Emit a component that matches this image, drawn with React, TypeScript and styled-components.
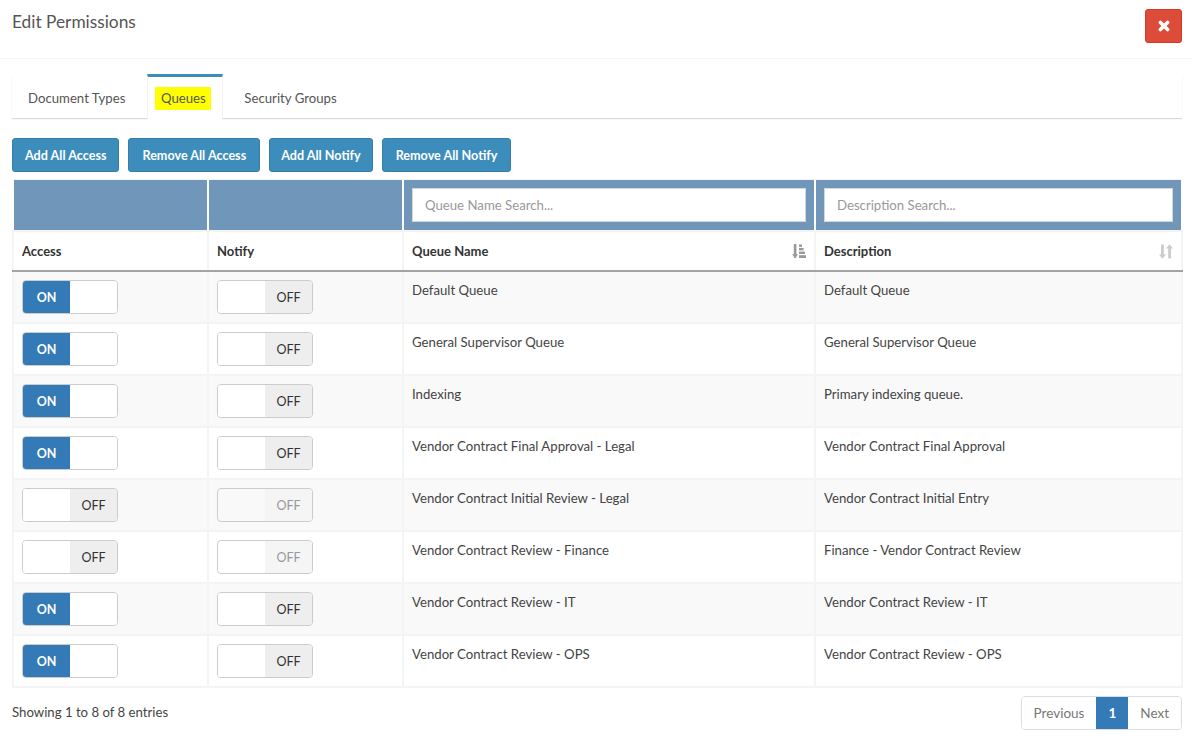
import React from "react";
import styled, { createGlobalStyle } from "styled-components";

const GlobalStyle = createGlobalStyle`
  html, body { margin: 0; padding: 0; background: #fff; }
  body {
    font-family: "Lato", "Noto Sans", sans-serif;
    font-size: 13.2px;
    color: #333;
    width: 1192px;
    height: 748px;
    overflow: hidden;
  }
  * { box-sizing: border-box; }
`;

const Header = styled.div`
  height: 59px;
  border-bottom: 1px solid #f4f4f4;
  padding: 9px 10px 0 12px;
  display: flex;
  justify-content: space-between;
  align-items: flex-start;
`;

const Title = styled.h4`
  margin: 2px 0 0;
  font-size: 17.3px;
  font-weight: 400;
  line-height: 22px;
  color: #555;
`;

const CloseButton = styled.button`
  width: 37px;
  height: 34px;
  border: 1px solid #d73925;
  border-radius: 3px;
  background: #dd4b39;
  color: #fff;
  padding: 0;
  display: flex;
  align-items: center;
  justify-content: center;
`;

const Body = styled.div`
  padding: 15px 10px 0 12px;
`;

const Tabs = styled.div`
  display: flex;
  height: 44px;
  box-shadow: 0 1px 1px rgba(0, 0, 0, 0.15);
`;

const Tab = styled.div<{ $active?: boolean }>`
  height: ${(p) => (p.$active ? "46px" : "44px")};
  padding: ${(p) => (p.$active ? "10px 11px 0 7px" : "12px 16px 0 15px")};
  border-top: 3px solid ${(p) => (p.$active ? "#3c8dbc" : "transparent")};
  background: #fff;
  color: #555;
  line-height: 18px;
  margin: ${(p) => (p.$active ? "0 5px" : "0")};
  border-left: 1px solid ${(p) => (p.$active ? "#f4f4f4" : "transparent")};
  border-right: 1px solid ${(p) => (p.$active ? "#f4f4f4" : "transparent")};
`;

const Mark = styled.span`
  display: block;
  background: #ffff00;
  height: 23px;
  width: 56px;
  text-align: center;
  line-height: 23px;
`;

const Actions = styled.div`
  display: flex;
  gap: 9px;
  margin-top: 20px;
  padding-bottom: 7px;
  border-bottom: 1px solid #f4f4f4;
`;

const ActionButton = styled.button<{ $pad: number }>`
  height: 34px;
  padding: 0 ${(p) => p.$pad}px;
  background: #3c8dbc;
  border: 1px solid #367fa9;
  border-radius: 3px;
  color: #fff;
  font-family: inherit;
  font-size: 12.6px;
  font-weight: 700;
  white-space: nowrap;
`;

const Table = styled.table`
  border-collapse: collapse;
  table-layout: fixed;
  width: 1169px;
`;

const FilterCell = styled.th`
  height: 50px;
  padding: 8px;
  background: #7096b9;
  border: 2px solid #f4f4f4;
  border-top: 0;
  border-left-color: #fff;
  border-right-color: #fff;
`;

const SearchInput = styled.input`
  display: block;
  width: 100%;
  height: 34px;
  padding: 0 12px;
  border: 1px solid #d2d6de;
  background: #fff;
  font-family: inherit;
  font-size: 13.2px;
  outline: none;
  &::placeholder { color: #999; opacity: 1; }
`;

const HeadCell = styled.th`
  height: 40px;
  padding: 0 8px;
  text-align: left;
  font-size: 13px;
  font-weight: 700;
  color: #333;
  background: #fff;
  border: 2px solid #f4f4f4;
  border-bottom: 2px solid #a3a3a3;
`;

const HeadInner = styled.div`
  display: flex;
  align-items: center;
  justify-content: space-between;
`;

const SortIcon = styled.span<{ $faded?: boolean }>`
  display: flex;
  color: ${(p) => (p.$faded ? "#ccc" : "#999")};
`;

const Row = styled.tr<{ $odd: boolean }>`
  background: ${(p) => (p.$odd ? "#f9f9f9" : "#fff")};
`;

const Cell = styled.td`
  height: 52px;
  padding: 8px;
  vertical-align: top;
  line-height: 20px;
  color: #444;
  border: 2px solid #f4f4f4;
`;

const Toggle = styled.div`
  width: 96px;
  height: 34px;
  display: flex;
  border: 1px solid #ccc;
  border-radius: 4px;
  overflow: hidden;
`;

const ToggleHalf = styled.span<{ $kind: "on" | "off" | "blank" | "offDisabled" | "blankDisabled" }>`
  flex: 1;
  display: flex;
  align-items: center;
  justify-content: center;
  padding-top: 2px;
  font-size: 12.5px;
  font-weight: ${(p) => (p.$kind === "on" ? 700 : 400)};
  color: ${(p) => (p.$kind === "on" ? "#fff" : p.$kind === "offDisabled" ? "#999" : "#333")};
  background: ${(p) =>
    p.$kind === "on"
      ? "#337ab7"
      : p.$kind === "off"
        ? "#eee"
        : p.$kind === "offDisabled"
          ? "#f5f5f5"
          : p.$kind === "blankDisabled"
            ? "transparent"
            : "#fff"};
`;

const Footer = styled.div`
  display: flex;
  justify-content: space-between;
  align-items: center;
  margin-top: 8px;
`;

const Info = styled.div`
  color: #444;
  padding-bottom: 2px;
`;

const Pager = styled.div`
  display: flex;
  height: 34px;
  border: 1px solid #ddd;
  border-radius: 4px;
  overflow: hidden;
  font-size: 13.5px;
`;

const PageItem = styled.span<{ $active?: boolean }>`
  padding: 0 12px;
  display: flex;
  align-items: center;
  font-weight: ${(p) => (p.$active ? 700 : 400)};
  color: ${(p) => (p.$active ? "#fff" : "#777")};
  background: ${(p) => (p.$active ? "#337ab7" : "#fff")};
`;

function SwitchControl({ on, disabled }: { on: boolean; disabled?: boolean }) {
  if (on) {
    return (
      <Toggle>
        <ToggleHalf $kind="on">ON</ToggleHalf>
        <ToggleHalf $kind="blank" />
      </Toggle>
    );
  }
  return (
    <Toggle>
      <ToggleHalf $kind={disabled ? "blankDisabled" : "blank"} />
      <ToggleHalf $kind={disabled ? "offDisabled" : "off"}>OFF</ToggleHalf>
    </Toggle>
  );
}

function CloseIcon() {
  return (
    <svg width="12" height="12" viewBox="0 0 12 12" fill="none" stroke="currentColor" strokeWidth="3.6" strokeLinecap="round">
      <path d="M2.4 2.4l7.2 7.2M9.6 2.4l-7.2 7.2" />
    </svg>
  );
}

function AmountIcon() {
  return (
    <svg width="14" height="15" viewBox="0 0 14 15" fill="currentColor">
      <path d="M1.8 0h2.6v10.2H6L3.1 14.8.2 10.2h1.6z" />
      <rect x="7" y="0.5" width="3" height="2.4" />
      <rect x="7" y="4" width="4.6" height="2.4" />
      <rect x="7" y="7.6" width="6" height="2.4" />
      <rect x="7" y="11.2" width="7" height="2.8" />
    </svg>
  );
}

function UpDownIcon() {
  return (
    <svg width="14" height="15" viewBox="0 0 14 15" fill="currentColor">
      <path d="M2 .5h2.8v10H7L3.4 14.8 0 10.5h2z" />
      <path d="M9.2 14.5H12v-10h2L10.6.2 7 4.5h2.2z" />
    </svg>
  );
}

const rows = [
  { access: true, notify: false, name: "Default Queue", description: "Default Queue" },
  { access: true, notify: false, name: "General Supervisor Queue", description: "General Supervisor Queue" },
  { access: true, notify: false, name: "Indexing", description: "Primary indexing queue." },
  { access: true, notify: false, name: "Vendor Contract Final Approval - Legal", description: "Vendor Contract Final Approval" },
  { access: false, notify: false, disabled: true, name: "Vendor Contract Initial Review - Legal", description: "Vendor Contract Initial Entry" },
  { access: false, notify: false, disabled: true, name: "Vendor Contract Review - Finance", description: "Finance - Vendor Contract Review" },
  { access: true, notify: false, name: "Vendor Contract Review - IT", description: "Vendor Contract Review - IT" },
  { access: true, notify: false, name: "Vendor Contract Review - OPS", description: "Vendor Contract Review - OPS" },
];

export default function App() {
  return (
    <>
      <GlobalStyle />
      <Header>
        <Title>Edit Permissions</Title>
        <CloseButton aria-label="Close">
          <CloseIcon />
        </CloseButton>
      </Header>
      <Body>
        <Tabs>
          <Tab>Document Types</Tab>
          <Tab $active>
            <Mark>Queues</Mark>
          </Tab>
          <Tab>Security Groups</Tab>
        </Tabs>
        <Actions>
          <ActionButton $pad={12}>Add All Access</ActionButton>
          <ActionButton $pad={13}>Remove All Access</ActionButton>
          <ActionButton $pad={11}>Add All Notify</ActionButton>
          <ActionButton $pad={13}>Remove All Notify</ActionButton>
        </Actions>
        <Table>
          <colgroup>
            <col style={{ width: 195 }} />
            <col style={{ width: 195 }} />
            <col style={{ width: 412 }} />
            <col style={{ width: 367 }} />
          </colgroup>
          <thead>
            <tr>
              <FilterCell />
              <FilterCell />
              <FilterCell>
                <SearchInput placeholder="Queue Name Search..." />
              </FilterCell>
              <FilterCell>
                <SearchInput placeholder="Description Search..." />
              </FilterCell>
            </tr>
            <tr>
              <HeadCell>Access</HeadCell>
              <HeadCell>Notify</HeadCell>
              <HeadCell>
                <HeadInner>
                  Queue Name
                  <SortIcon>
                    <AmountIcon />
                  </SortIcon>
                </HeadInner>
              </HeadCell>
              <HeadCell>
                <HeadInner>
                  Description
                  <SortIcon $faded>
                    <UpDownIcon />
                  </SortIcon>
                </HeadInner>
              </HeadCell>
            </tr>
          </thead>
          <tbody>
            {rows.map((row, i) => (
              <Row key={row.name} $odd={i % 2 === 0}>
                <Cell>
                  <SwitchControl on={row.access} />
                </Cell>
                <Cell>
                  <SwitchControl on={row.notify} disabled={row.disabled} />
                </Cell>
                <Cell>{row.name}</Cell>
                <Cell>{row.description}</Cell>
              </Row>
            ))}
          </tbody>
        </Table>
        <Footer>
          <Info>Showing 1 to 8 of 8 entries</Info>
          <Pager>
            <PageItem>Previous</PageItem>
            <PageItem $active>1</PageItem>
            <PageItem>Next</PageItem>
          </Pager>
        </Footer>
      </Body>
    </>
  );
}
